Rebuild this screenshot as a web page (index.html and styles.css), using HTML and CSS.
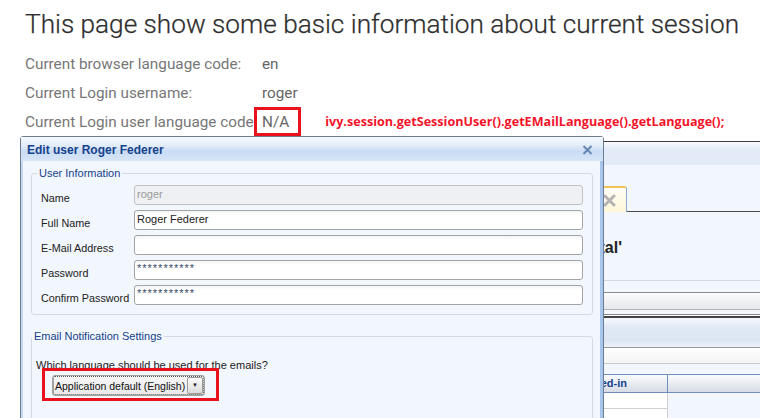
FILE: index.html
```html
<!DOCTYPE html>
<html lang="en">
<head>
    <meta charset="UTF-8">
    <meta name="viewport" content="width=device-width, initial-scale=1.0">
    <title>Session Info</title>
    <link rel="stylesheet" href="styles.css">
</head>
<body>
    <div class="page">
        <h1 class="page-title">This page show some basic information about current session</h1>

        <div class="info">
            <div class="info-row">
                <span class="info-label">Current browser language code:</span>
                <span class="info-value">en</span>
            </div>
            <div class="info-row">
                <span class="info-label">Current Login username:</span>
                <span class="info-value">roger</span>
            </div>
            <div class="info-row">
                <span class="info-label">Current Login user language code:</span>
                <span class="info-cell">
                    <span class="info-value marked">N/A</span>
                    <span class="code-note">ivy.session.getSessionUser().getEMailLanguage().getLanguage();</span>
                </span>
            </div>
        </div>
    </div>

    <!-- window behind the dialog -->
    <div class="bg-window">
        <div class="bg-head"></div>
        <div class="bg-body">
            <div class="tab-strip">
                <div class="tab">
                    <span class="tab-text">Home</span>
                    <svg class="tab-close" width="13" height="13" viewBox="0 0 13 13">
                        <path d="M2 2 L11 11 M11 2 L2 11" stroke="#b4b4b4" stroke-width="3" stroke-linecap="round"/>
                    </svg>
                </div>
            </div>
            <div class="welcome"><span>Welcome to 'Portal'</span></div>
            <div class="bar bar-plain"></div>
            <div class="bar bar-tools"></div>
            <div class="bar bar-panel"></div>
            <div class="bar bar-white"></div>
            <div class="grid">
                <div class="grid-head">
                    <div class="grid-col col-user">Logged-in</div>
                    <div class="grid-col col-rest"></div>
                </div>
                <div class="grid-row">
                    <div class="grid-cell col-user"></div>
                    <div class="grid-cell col-rest"></div>
                </div>
                <div class="grid-row">
                    <div class="grid-cell col-user"></div>
                    <div class="grid-cell col-rest"></div>
                </div>
            </div>
        </div>
    </div>

    <!-- edit user dialog -->
    <div class="dialog">
        <div class="dialog-head">
            <span class="dialog-title">Edit user Roger Federer</span>
            <svg class="dialog-close" width="11" height="10" viewBox="0 0 11 10">
                <path d="M1.5 1 L9.5 9 M9.5 1 L1.5 9" stroke="#6686b3" stroke-width="2"/>
            </svg>
        </div>
        <div class="dialog-body">
            <fieldset class="group">
                <legend>User Information</legend>
                <div class="form-row">
                    <label>Name</label>
                    <div class="field disabled">roger</div>
                </div>
                <div class="form-row">
                    <label>Full Name</label>
                    <div class="field">Roger Federer</div>
                </div>
                <div class="form-row">
                    <label>E-Mail Address</label>
                    <div class="field"></div>
                </div>
                <div class="form-row">
                    <label>Password</label>
                    <div class="field secret">***********</div>
                </div>
                <div class="form-row">
                    <label>Confirm Password</label>
                    <div class="field secret">***********</div>
                </div>
            </fieldset>

            <fieldset class="group group-mail">
                <legend>Email Notification Settings</legend>
                <div class="question">Which language should be used for the emails?</div>
                <div class="select-wrap">
                    <div class="select">
                        <span class="select-text">Application default (English)</span>
                        <span class="select-btn">&#9660;</span>
                    </div>
                </div>
            </fieldset>
        </div>
    </div>
</body>
</html>
```

FILE: styles.css
```css
html, body {
    margin: 0;
    height: 100%;
    overflow: hidden;
}
body {
    position: relative;
    background: #fff;
    font-family: Roboto, "Liberation Sans", sans-serif;
}

/* ---- page text ---- */
.page {
    padding: 6px 0 0 25px;
}
.page-title {
    margin: 0;
    font-size: 26.2px;
    font-weight: 300;
    line-height: 36px;
    color: #2e2e2e;
    white-space: nowrap;
    -webkit-text-stroke: 0.25px #2e2e2e;
}
.info {
    margin-top: 7px;
}
.info-row {
    display: grid;
    grid-template-columns: 237px auto;
    height: 29px;
    align-items: center;
    font-size: 15.3px;
    color: #777;
    white-space: nowrap;
}
.info-value {
    color: #666;
}
.info-cell {
    display: flex;
    align-items: center;
}
.marked {
    position: relative;
}
.marked::after {
    content: "";
    position: absolute;
    left: -8px;
    right: -12px;
    top: -6px;
    bottom: -5px;
    border: 3px solid #e8111c;
}
.code-note {
    margin-left: 36px;
    font-family: "Open Sans", sans-serif;
    font-size: 12.6px;
    font-weight: 700;
    color: #f2142a;
}

/* ---- background window ---- */
.bg-window {
    position: absolute;
    left: 540px;
    top: 141px;
    width: 400px;
    height: 300px;
    border-top: 1px solid #3c3c3c;
    background: #f2f6fd;
}
.bg-head {
    height: 23px;
    background: linear-gradient(#fafbfd, #e4ecf8 30%, #e1eaf7);
}
.tab-strip {
    margin-top: 21px;
    height: 25px;
    border-bottom: 1px solid #4d4d4d;
    display: flex;
}
.tab {
    margin-left: 5px;
    width: 80px;
    height: 24px;
    border: 1px solid #8ea9cf;
    border-bottom: none;
    border-top: 2px solid #f4c25a;
    border-radius: 3px 3px 0 0;
    background: linear-gradient(#fffef6, #fff6d8);
    display: flex;
    align-items: center;
    margin-bottom: -1px;
    font: 11px "Liberation Sans", sans-serif;
}
.tab-text {
    flex: 1;
    padding-left: 8px;
}
.tab-close {
    margin-right: 10px;
}
.welcome {
    width: 82px;
    margin-top: 27px;
    display: flex;
    justify-content: flex-end;
    white-space: nowrap;
    font: bold 16px "Liberation Sans", sans-serif;
    color: #222;
}
.bar-plain {
    margin-top: 23px;
    height: 11px;
    border-top: 1px solid #d5d9df;
}
.bar-tools {
    height: 16px;
    border-top: 1px solid #8b8b8b;
    border-bottom: 1px solid #b3b3b3;
    background: linear-gradient(#fbfbfc, #e6e8ec);
}
.bar-panel {
    margin-top: 4px;
    height: 32px;
    border-top: 1px solid #888;
    box-shadow: inset 0 3px 0 -2px #fff, inset 0 3px 0 0 #444;
    border-bottom: 1px solid #999;
    background: linear-gradient(#f5f7fa, #f3f6fa 15%, #dfe8f5 40%, #dce6f3 80%, #eef2f8);
}
.bar-white {
    height: 15px;
    border-bottom: 1px solid #c9c9c9;
    background: linear-gradient(#fff, #f4f4f4);
}
.grid {
    margin-top: 10px;
    font: bold 11px "Liberation Sans", sans-serif;
    color: #15428b;
}
.grid-head {
    display: flex;
    height: 17px;
    border-top: 1px solid #6f8fba;
    border-bottom: 1px solid #6f8fba;
    background: linear-gradient(#fafbfc, #d6dce6);
}
.grid-col {
    line-height: 17px;
}
.col-user {
    width: 128px;
    text-align: right;
    border-right: 1px solid #6f8fba;
    box-sizing: border-box;
}
.grid-head .col-user {
    padding-right: 40px;
}
.col-rest {
    flex: 1;
}
.grid-row {
    display: flex;
    height: 16px;
}
.grid-cell.col-user {
    background: #fff;
    border-right: 1px solid #cfcfcf;
    border-bottom: 1px solid #cfcfcf;
}

/* ---- dialog ---- */
.dialog {
    position: absolute;
    left: 20px;
    top: 136px;
    width: 582px;
    height: 300px;
    border: 1px solid #6e7c92;
    border-radius: 3px 3px 0 0;
    background: #f2f6fd;
    font-family: "Liberation Sans", Arial, sans-serif;
    font-size: 11px;
    color: #222;
}
.dialog-head {
    height: 24px;
    padding: 2px 10px 0 6px;
    box-sizing: border-box;
    display: flex;
    align-items: center;
    justify-content: space-between;
    background: linear-gradient(#f6f9fd, #e3edf9 35%, #cadcf5 60%, #d7e5f7);
}
.dialog-title {
    font-weight: bold;
    font-size: 12px;
    color: #15428b;
}
.dialog-body {
    height: 100%;
    padding-top: 6px;
    border-left: 2px solid #c4d7f1;
    border-right: 3px solid #a8c5ec;
}
.group {
    margin: 0 7px 0 8px;
    padding: 6px 9px 9px 9px;
    border: 1px solid #d3dae5;
    border-radius: 3px;
}
.group legend {
    margin-left: -4px;
    padding: 0 2px;
    color: #15428b;
    font-size: 11px;
}
.form-row {
    display: grid;
    grid-template-columns: 93px 1fr;
    align-items: center;
    height: 20px;
    margin-bottom: 5px;
}
.form-row label {
    padding-top: 5px;
    font-size: 10.8px;
}
.form-row:last-child {
    margin-bottom: 0;
}
.field {
    height: 18px;
    line-height: 17px;
    padding-left: 2px;
    border: 1px solid #a4a4a4;
    border-radius: 3px;
    background: linear-gradient(#f4f4f4, #fff 4px);
    color: #222;
}
.field.disabled {
    background: #eef0f3;
    border-color: #c2c2c2;
    color: #9a9a9a;
}
.field.secret {
    color: #36496c;
    line-height: 14px;
    letter-spacing: 1px;
}
.group-mail {
    margin-top: 15px;
    padding: 17px 4px 40px 4px;
}
.question {
    font-size: 11px;
}
.select-wrap {
    margin: 4px 0 0 16px;
    position: relative;
    width: 153px;
}
.select-wrap::after {
    content: "";
    position: absolute;
    left: -10px;
    right: -14px;
    top: -7px;
    bottom: -5px;
    border: 3px solid #e8111c;
}
.select {
    height: 19px;
    display: flex;
    align-items: center;
    border: 1px solid #a2a2a2;
    border-radius: 3px;
    background: linear-gradient(#f7f7f7, #e9e9e9);
    outline: 1px dotted #555;
    outline-offset: -2px;
}
.select-text {
    flex: 1;
    padding-left: 2px;
    white-space: nowrap;
    font-size: 10.5px;
    color: #111;
}
.select-btn {
    width: 14px;
    height: 15px;
    margin-right: 1px;
    border: 1px solid #9c9c9c;
    border-radius: 2px;
    background: linear-gradient(#fafafa, #dcdcdc);
    font-size: 6px;
    line-height: 15px;
    text-align: center;
    color: #222;
}
```
